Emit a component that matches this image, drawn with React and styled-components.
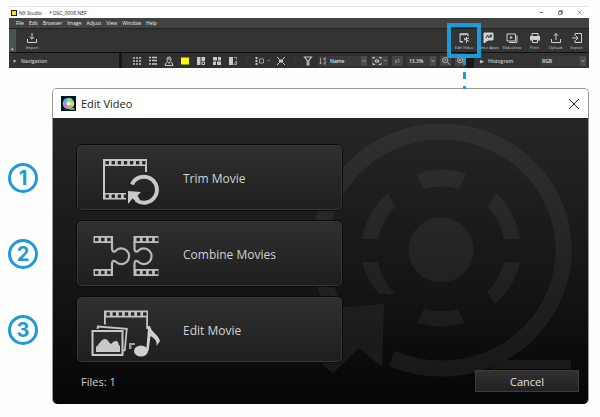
import React from 'react';
import styled, { createGlobalStyle } from 'styled-components';

const ACCENT = '#1e9ad6';

const Svg = ({ size = 12, children }) => (
  <svg width={size} height={size} viewBox="0 0 12 12" fill="none" stroke="currentColor" strokeWidth="1" aria-hidden="true">
    {children}
  </svg>
);

const ICONS = {
  import: <path d="M6 1v6M3.800 5L6 7.200 8.200 5M1.500 7v3.500h9V7" />,
  video: <path d="M10 4.500V2H2v8h3M1.500 2h9M2 9.500h3M3.500 2v1.500M5.500 2v1.500M7.500 2v1.500M6 8l5-2M6 6l5 3.500M8.500 5v6" />,
  apps: (
    <>
      <path d="M2 1h9v7H6l-4 3z" fill="currentColor" />
      <path d="M4 6l1.500-3L7 6M8 6V3h1.500v1.500H8" stroke="#333" />
    </>
  ),
  slideshow: (
    <>
      <path d="M1 2h8.500v7H1zM11 3.500v7H3" />
      <path d="M4 4l3 1.500L4 7z" fill="currentColor" stroke="none" />
    </>
  ),
  print: (
    <>
      <path d="M3 4V1.500h6V4" />
      <path d="M1 4h10v4.500H9V7H3v1.500H1z" fill="currentColor" stroke="none" />
      <path d="M3.500 7.500h5v3h-5z" />
    </>
  ),
  upload: <path d="M6 8V1.500M3.800 3.700L6 1.500l2.200 2.200M1.500 7v3.500h9V7" />,
  export: <path d="M4 4V1.500h6.500v9H4V8M1 6h6M5 4l2 2-2 2" />,
  grid: (
    <path d="M2 2h2v2H2zM5 2h2v2H5zM8 2h2v2H8zM2 5h2v2H2zM5 5h2v2H5zM8 5h2v2H8zM2 8h2v2H2zM5 8h2v2H5zM8 8h2v2H8z" fill="currentColor" stroke="#333" strokeWidth="0.3" />
  ),
  list: <path d="M2 2.500h2M5 2.500h5M2 5.500h2M5 5.500h5M2 9h2M5 9h5" strokeWidth="1.400" />,
  map: (
    <>
      <path d="M3.500 7L2 10.500h8L8.500 7M6 8.500C4.500 6.500 4 5.500 4 4a2 2 0 0 1 4 0c0 1.500-.5 2.500-2 4.500z" />
      <circle cx="6" cy="4" r="0.500" />
    </>
  ),
  single: <path d="M2 2.500h8v7H2z" fill="#ff0" stroke="none" />,
  compare: (
    <>
      <path d="M2 2h3.500v8H2zM6.500 2H10v4H6.500z" fill="currentColor" stroke="none" />
      <path d="M7 7h2.500v2.500H7z" />
    </>
  ),
  four: <path d="M2 2h4v3.500H2zM7 2h3v3.500H7zM2 6.500h3V10H2zM6 6.500h4V10H6z" fill="currentColor" stroke="none" />,
  before: (
    <>
      <path d="M2 2h4v8H2z" fill="currentColor" stroke="none" />
      <path d="M7 2.500h2.500v2M7 9.500L9.500 6v3.500z" opacity="0.700" />
    </>
  ),
  strip: (
    <>
      <path d="M1.500 2h2v2h-2zM1.500 5h2v2h-2zM1.500 8h2v2h-2z" fill="currentColor" stroke="none" />
      <path d="M5.500 4h4v4h-4z" opacity="0.700" />
    </>
  ),
  expand: (
    <>
      <path d="M4 4.500h4v3H4z" fill="currentColor" stroke="none" />
      <path d="M2 2l2.500 2.500M10 2L7.500 4.500M10 10L7.500 7.500M2 10l2.500-2.500" />
    </>
  ),
  filter: <path d="M2.500 2h7L6.800 5.500V10H5.200V5.500z" strokeWidth="1.200" />,
  sort: <path d="M3 2v7.500M1.500 8L3 9.500 4.500 8M7 2.500h2v2H7zM7 7h2.500L7 9.500h2.500" strokeWidth="0.800" />,
  fit: <path d="M2 4V2.500h2M8 2.500h2V4M10 8v1.500H8M4 9.500H2V8M4.500 5h3v2h-3z" />,
  zoomOut: <path d="M8 8l2.500 2.500M3.500 5h3M5 2a3 3 0 1 0 0 6.200A3 3 0 0 0 5 2z" />,
  zoomIn: <path d="M8 8l2.500 2.500M3.500 5h3M5 3.500v3M5 2a3 3 0 1 0 0 6.200A3 3 0 0 0 5 2z" />,
  chevron: <path d="M3 4.500l3 3 3-3" strokeWidth="1.500" />,
  close: <path d="M1 1l10 10M11 1L1 11" />,
  minimize: <path d="M2 6h8" strokeWidth="1.500" />,
  restore: <path d="M1.500 3.500h7v7h-7zM4 3.500v-2h6.500v7h-2" strokeWidth="1.500" />,
};

const Holes = ({ x, y, count }) =>
  Array.from({ length: count }, (_, i) => (
    <rect key={i} x={x + i * 6.1} y={y} width="3.4" height="3.4" fill="#252525" />
  ));

const TrimArt = () => (
  <ArtSvg viewBox="0 0 88 65">
    <path d="M26 13h44v13h-2v-6H28v27h21v6.500H26z" fill="#c4c4c4" />
    <Holes x={28.5} y={15} count={7} />
    <Holes x={28.5} y={48.5} count={4} />
    <path d="M55 38.500a13 13 0 1 1 4 15.500" fill="none" stroke="#c8c8c8" strokeWidth="4" />
    <path d="M51 45l13 1-3.500 3.500 2.500 4.500-4.500 1-3-2.500L51 58z" fill="#c8c8c8" />
  </ArtSvg>
);

const CombineArt = () => (
  <ArtSvg viewBox="0 0 88 65">
    <path d="M16.500 14h19.500v7H16.500zM16.500 47h19.500v7H16.500zM56.500 14h25v7h-25zM56.500 47h25v7h-25z" fill="#bdbdbd" />
    <Holes x={18} y={15.8} count={3} />
    <Holes x={18} y={48.8} count={3} />
    <Holes x={59.5} y={15.8} count={4} />
    <Holes x={59.5} y={48.8} count={4} />
    <g fill="none" stroke="#b8b8b8" strokeWidth="2.200">
      <path d="M35 20v7c0 3 2.500 3.500 4 1.500a7.800 7.800 0 1 1 0 11.500c-1.500-2-4-1.500-4 1.500v6" />
      <path d="M57.500 20v7c0 3 2.500 3.500 4 1.500a7.800 7.800 0 1 1 0 11.500c-1.500-2-4-1.500-4 1.500v6" />
    </g>
  </ArtSvg>
);

const EditArt = () => (
  <ArtSvg viewBox="0 0 88 65">
    <path d="M27 12.500h44V31h-1.800V19.500H28.800v7H27z" fill="#c4c4c4" />
    <Holes x={29.5} y={14.3} count={7} />
    <path d="M20.500 31l.3-2.500 29 2.300-2 21.500-2 .2" fill="none" stroke="#c4c4c4" strokeWidth="1.800" />
    <rect x="15.500" y="33" width="30" height="24" fill="#2a2a2a" stroke="#c8c8c8" strokeWidth="2" />
    <path d="M19 54v-5c3-2 5-8 9-8 3 0 4 4 6 5 2-2 3-3 5-3 3 0 2 4 4 5v6z" fill="#c8c8c8" />
    <path d="M52 51v-6h6v2h-3.500v4z" fill="#9c9c9c" />
    <ellipse cx="64" cy="53" rx="7" ry="5.500" fill="#d0d0d0" />
    <path d="M69.200 53l2-25h1.800c1 6 8 8 10 15l-3.500 5c1-6-3-8-6-10l-2 15z" fill="#d0d0d0" />
  </ArtSvg>
);

const ReelArt = () => (
  <Reel viewBox="0 0 274 286" aria-hidden="true">
    <defs>
      <linearGradient id="reel" x1="0" y1="0" x2="0" y2="286" gradientUnits="userSpaceOnUse">
        <stop offset="0" stopColor="#313131" />
        <stop offset="1" stopColor="#151515" />
      </linearGradient>
    </defs>
    <path d="M78 240.300A122 118.500 0 1 0 19 186" fill="none" stroke="url(#reel)" strokeWidth="16" />
    <g fill="url(#reel)">
      <circle cx="127" cy="132" r="32.500" />
      <path d="M102 56a84 84 0 0 1 50 0l-7 15a64 64 0 0 0-35 0z" />
      <path d="M182 75a79 79 0 0 1 24 46h-16a63 63 0 0 0-16-32z" />
      <path d="M190 144h16a79 79 0 0 1-25 42l-8-12a63 63 0 0 0 17-30z" />
      <path d="M110 191a64 64 0 0 0 34 0l6 14a84 84 0 0 1-47 0z" />
      <path d="M48 144h16a63 63 0 0 0 17 32H65a79 79 0 0 1-17-32z" />
      <path d="M74 75l7 14a63 63 0 0 0-17 32H48a79 79 0 0 1 26-46z" />
      <path d="M21 190l49-4-2 63-23-19-26 25-11-9z" />
      <path d="M191 242h66v9h-81z" />
    </g>
  </Reel>
);

const TOOLS = [
  { label: 'Edit Video', icon: 'video', wide: true, marked: true },
  { label: 'Other Apps', icon: 'apps', wide: true },
  { label: 'Slideshow', icon: 'slideshow', wide: true },
  { label: 'Print', icon: 'print' },
  { label: 'Upload', icon: 'upload' },
  { label: 'Export', icon: 'export' },
];

const MOVIE_ACTIONS = [
  { label: 'Trim Movie', Art: TrimArt },
  { label: 'Combine Movies', Art: CombineArt },
  { label: 'Edit Movie', Art: EditArt },
];

const Dropdown = ({ label, value, icon, width }) => (
  <SelectBox $width={width}>
    {icon && <Svg size={10}>{ICONS[icon]}</Svg>}
    <Select aria-label={label} defaultValue={value}>
      <option>{value}</option>
    </Select>
    <Arrow>
      <Svg size={6}>{ICONS.chevron}</Svg>
    </Arrow>
  </SelectBox>
);

const StudioWindow = () => (
  <Studio>
    <StudioTitle>
      <StudioLogo />
      <span>NX Studio</span>
      <FileName>* DSC_0008.NEF</FileName>
      <WindowButton aria-label="Minimize"><Svg size={5}>{ICONS.minimize}</Svg></WindowButton>
      <WindowButton aria-label="Restore"><Svg size={5}>{ICONS.restore}</Svg></WindowButton>
      <WindowButton aria-label="Close"><Svg size={5}>{ICONS.close}</Svg></WindowButton>
    </StudioTitle>
    <MenuBar>
      {['File', 'Edit', 'Browser', 'Image', 'Adjust', 'View', 'Window', 'Help'].map((item) => (
        <MenuItem key={item}>{item}</MenuItem>
      ))}
    </MenuBar>
    <Toolbar>
      <Grip>▴</Grip>
      <ToolButton $wide>
        <Svg>{ICONS.import}</Svg>
        Import
      </ToolButton>
      <Spacer />
      {TOOLS.map(({ label, icon, wide, marked }) => (
        <ToolButton key={label} $wide={wide} $marked={marked}>
          <Svg>{ICONS[icon]}</Svg>
          {label}
        </ToolButton>
      ))}
    </Toolbar>
    <ViewBar>
      <NavPanel>▼<PanelName>Navigation</PanelName></NavPanel>
      <ViewTools>
        {['grid', 'list', 'map', 'single', 'compare', 'four', 'before'].map((name) => (
          <ViewButton key={name} aria-label={name}><Svg>{ICONS[name]}</Svg></ViewButton>
        ))}
        <Divider />
        <ViewButton aria-label="Filmstrip">
          <Svg>{ICONS.strip}</Svg>
          <Svg size={5}>{ICONS.chevron}</Svg>
        </ViewButton>
        <ViewButton aria-label="Full screen"><Svg>{ICONS.expand}</Svg></ViewButton>
        <Divider />
        <ViewButton aria-label="Filter"><Svg>{ICONS.filter}</Svg></ViewButton>
        <Controls>
          <Dropdown label="Sort by" value="Name" icon="sort" width={49} />
          <ZoomButton aria-label="Fit">
            <Svg>{ICONS.fit}</Svg>
            <Svg size={5}>{ICONS.chevron}</Svg>
          </ZoomButton>
          <ZoomButton>x1</ZoomButton>
          <Dropdown label="Zoom" value="13.3%" width={29} />
          <ZoomButton aria-label="Zoom out"><Svg size={10}>{ICONS.zoomOut}</Svg></ZoomButton>
          <ZoomButton aria-label="Zoom in"><Svg size={10}>{ICONS.zoomIn}</Svg></ZoomButton>
        </Controls>
      </ViewTools>
      <HistogramPanel>
        ▶<PanelName>Histogram</PanelName>
        <Spacer />
        <Dropdown label="Channel" value="RGB" width={46} />
      </HistogramPanel>
    </ViewBar>
  </Studio>
);

const EditVideoDialog = () => (
  <Dialog role="dialog" aria-labelledby="dialog-title">
    <DialogTitle>
      <svg width="15" height="15" viewBox="0 0 15 15" aria-hidden="true">
        <rect width="15" height="15" fill="#06151c" />
        <circle cx="7.500" cy="7.500" r="5.800" fill="#5cc4c8" />
        <path d="M8 12h5.500v2H9z" fill="#41b06a" />
        <circle cx="5" cy="5" r="2.200" fill="#6fa8e8" />
        <circle cx="9" cy="4.500" r="2.200" fill="#8fdc7c" />
        <circle cx="11" cy="8" r="2" fill="#e8dd58" />
        <circle cx="8.500" cy="10.500" r="2.200" fill="#ee9a62" />
        <circle cx="4.700" cy="9" r="2.200" fill="#c77fd6" />
        <circle cx="7.500" cy="7.500" r="2" fill="#f4f5d8" />
      </svg>
      <TitleText id="dialog-title">Edit Video</TitleText>
      <CloseButton aria-label="Close"><Svg>{ICONS.close}</Svg></CloseButton>
    </DialogTitle>
    <DialogBody>
      <ReelArt />
      <ActionList>
        {MOVIE_ACTIONS.map(({ label, Art }) => (
          <ActionButton key={label}>
            <Art />
            {label}
          </ActionButton>
        ))}
      </ActionList>
      <Footer>
        <span>Files: 1</span>
        <CancelButton>Cancel</CancelButton>
      </Footer>
    </DialogBody>
  </Dialog>
);

const App = () => (
  <Page>
    <GlobalStyle />
    <StudioWindow />
    <Callout>
      <Steps>
        {[1, 2, 3].map((n) => (
          <Step key={n}>{n}</Step>
        ))}
      </Steps>
      <EditVideoDialog />
    </Callout>
  </Page>
);

const GlobalStyle = createGlobalStyle`
  *,
  *::before,
  *::after {
    box-sizing: border-box;
  }

  body {
    margin: 0;
    background: #fefefe;
    font-family: 'Open Sans', 'Noto Sans', sans-serif;
  }

  button,
  select {
    margin: 0;
    padding: 0;
    border: none;
    background: none;
    color: inherit;
    font: inherit;
  }

  svg {
    display: block;
    flex: none;
  }
`;

const Page = styled.main`
  padding: 6px 11px 12px 8px;
`;

const Studio = styled.section`
  margin-left: 1px;
  background: #333;
  color: #c8c8c8;
  font-size: 5px;
  line-height: 8px;
`;

const StudioTitle = styled.header`
  display: flex;
  align-items: center;
  height: 12px;
  padding: 0 7px 0 2px;
  border-top: 1px solid #e4e4e4;
  background: #fff;
  color: #222;
`;

const StudioLogo = styled.span`
  width: 6px;
  height: 6px;
  margin-right: 2px;
  border: 1px solid #222;
  background: #f5e400;
`;

const FileName = styled.span`
  flex: 1;
  margin-left: 7px;
`;

const WindowButton = styled.button`
  margin-left: 14px;
`;

const MenuBar = styled.nav`
  display: flex;
  gap: 5px;
  align-items: center;
  height: 10px;
  padding-left: 7px;
  background: #424242;
`;

const MenuItem = styled.button`
  color: #eee;
`;

const Toolbar = styled.div`
  display: flex;
  height: 24px;
  padding-right: 2px;
  border-top: 1px solid #222;
`;

const Grip = styled.span`
  display: flex;
  align-items: flex-end;
  justify-content: center;
  width: 7px;
  margin-right: 4px;
  background: #4c5252;
`;

const Spacer = styled.span`
  flex: 1;
`;

const ToolButton = styled.button`
  display: flex;
  flex-direction: column;
  align-items: center;
  width: ${({ $wide }) => ($wide ? 24 : 21)}px;
  padding-top: 3px;
  color: #d0d0d0;
  font-size: 4px;
  white-space: nowrap;

  ${({ $marked }) =>
    $marked &&
    `
    position: relative;
    z-index: 1;

    &::before {
      content: '';
      position: absolute;
      top: -6px;
      left: -5px;
      width: 34px;
      height: 35px;
      border: 4px solid ${ACCENT};
    }

    &::after {
      content: '';
      position: absolute;
      top: 29px;
      left: 11px;
      width: 3px;
      height: 31px;
      background: repeating-linear-gradient(${ACCENT} 0 7px, transparent 7px 14px);
    }
  `}
`;

const ViewBar = styled.div`
  display: flex;
  gap: 3px;
  height: 16px;
  border-top: 1px solid #111;
  background: #181818;
`;

const NavPanel = styled.div`
  display: flex;
  align-items: center;
  width: 110px;
  padding-left: 3px;
  background: #333;
`;

const PanelName = styled.span`
  margin-left: 4px;
  font-weight: 600;
`;

const ViewTools = styled.div`
  display: flex;
  flex: 1;
  gap: 4px;
  align-items: center;
  padding-left: 9px;
  background: #303030;
`;

const ViewButton = styled.button`
  display: flex;
  align-items: center;
`;

const Divider = styled.span`
  width: 1px;
  height: 8px;
  margin: 0 3px;
  background: #3a3a3a;
`;

const Controls = styled.div`
  display: flex;
  gap: 4px;
`;

const ZoomButton = styled.button`
  display: flex;
  align-items: center;
  justify-content: center;
  min-width: 11px;
  height: 10px;
  background: #464646;
`;

const HistogramPanel = styled.div`
  display: flex;
  align-items: center;
  width: 115px;
  margin-left: 5px;
  padding: 0 3px 0 6px;
  background: #333;
`;

const SelectBox = styled.div`
  display: flex;
  align-items: center;
  width: ${({ $width }) => $width}px;
  height: 10px;
  background: #3a3a3a;
`;

const Select = styled.select`
  flex: 1;
  min-width: 0;
  padding-left: 2px;
  appearance: none;
  color: #e0e0e0;
  font-weight: 600;
`;

const Arrow = styled.span`
  display: flex;
  align-items: center;
  height: 10px;
  background: #4c4c4c;
`;

const Callout = styled.div`
  display: flex;
  gap: 14px;
  margin-top: 20px;
`;

const Steps = styled.div`
  display: grid;
  gap: 46px;
  align-content: start;
  padding-top: 75px;
`;

const Step = styled.span`
  display: flex;
  align-items: center;
  justify-content: center;
  width: 30px;
  height: 30px;
  border: 3px solid ${ACCENT};
  border-radius: 50%;
  color: ${ACCENT};
  font: 700 20px Inter, sans-serif;
`;

const Dialog = styled.section`
  flex: 1;
  overflow: hidden;
  border: 1px solid #999;
  border-bottom: none;
  border-radius: 5px;
`;

const DialogTitle = styled.header`
  display: flex;
  align-items: center;
  height: 29px;
  padding: 0 8px;
  background: #fff;
  color: #222;
`;

const TitleText = styled.h1`
  flex: 1;
  margin: 0 0 0 5px;
  font-size: 11px;
  font-weight: 400;
`;

const CloseButton = styled.button`
  color: #222;
`;

const DialogBody = styled.div`
  position: relative;
  padding: 27px 9px 12px 24px;
  background: linear-gradient(#262626, #141414 60%, #050505);
  color: #d2d2d2;
  font-size: 12px;
`;

const Reel = styled.svg`
  position: absolute;
  top: 0;
  right: 0;
  width: 274px;
  height: 286px;
`;

const ActionList = styled.div`
  position: relative;
  display: grid;
  gap: 11px;
  width: 265px;
`;

const ActionButton = styled.button`
  display: flex;
  gap: 18px;
  align-items: center;
  height: 65px;
  padding-top: 1px;
  border-radius: 5px;
  background: linear-gradient(#303030, #1e1e1e);
  box-shadow: 0 0 0 1px #0c0c0c, inset 0 0 0 1px #363636;
  text-align: left;
`;

const ArtSvg = styled.svg.attrs({ 'aria-hidden': true })`
  width: 88px;
  height: 65px;
`;

const Footer = styled.footer`
  position: relative;
  display: flex;
  align-items: center;
  justify-content: space-between;
  margin-top: 8px;
  padding-left: 4px;
  font-size: 11px;
`;

const CancelButton = styled.button`
  width: 104px;
  height: 22px;
  border: 1px solid #3c3c3c;
  background: linear-gradient(#303030, #222);
  color: #e0e0e0;
`;

export default App;
